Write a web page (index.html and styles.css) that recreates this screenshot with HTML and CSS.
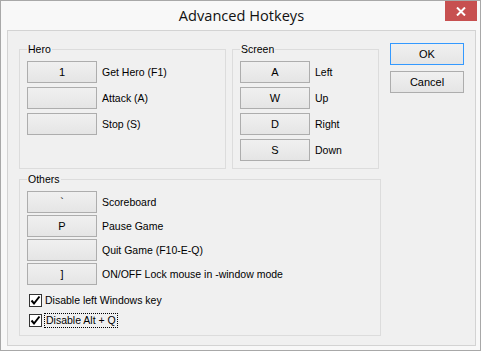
FILE: index.html
```html
<!DOCTYPE html>
<html lang="en">
<head>
  <meta charset="UTF-8">
  <title>Advanced Hotkeys</title>
  <link rel="stylesheet" href="styles.css">
</head>
<body>
  <div class="window">
    <div class="titlebar">
      <span class="title">Advanced Hotkeys</span>
      <button class="close" title="Close">
        <svg width="10" height="9" viewBox="0 0 10 9">
          <path d="M1 0.5 L9 8.5 M9 0.5 L1 8.5" stroke="#fff" stroke-width="2"/>
        </svg>
      </button>
    </div>

    <div class="client">
      <div class="top">
        <fieldset class="group hero">
          <legend>Hero</legend>
          <div class="row"><button class="key">1</button><span>Get Hero (F1)</span></div>
          <div class="row"><button class="key"></button><span>Attack (A)</span></div>
          <div class="row"><button class="key"></button><span>Stop (S)</span></div>
        </fieldset>

        <fieldset class="group screen">
          <legend>Screen</legend>
          <div class="row"><button class="key">A</button><span>Left</span></div>
          <div class="row"><button class="key">W</button><span>Up</span></div>
          <div class="row"><button class="key">D</button><span>Right</span></div>
          <div class="row"><button class="key">S</button><span>Down</span></div>
        </fieldset>

        <div class="actions">
          <button class="btn default">OK</button>
          <button class="btn">Cancel</button>
        </div>
      </div>

      <fieldset class="group others">
        <legend>Others</legend>
        <div class="row"><button class="key">`</button><span>Scoreboard</span></div>
        <div class="row"><button class="key">P</button><span>Pause Game</span></div>
        <div class="row"><button class="key"></button><span>Quit Game (F10-E-Q)</span></div>
        <div class="row"><button class="key">]</button><span>ON/OFF Lock mouse in -window mode</span></div>

        <label class="check">
          <span class="box"><svg width="11" height="11" viewBox="0 0 11 11"><path d="M1.5 5.5 L4 8.5 L9.5 1.5" fill="none" stroke="#000" stroke-width="2"/></svg></span>
          <span>Disable left Windows key</span>
        </label>
        <label class="check">
          <span class="box"><svg width="11" height="11" viewBox="0 0 11 11"><path d="M1.5 5.5 L4 8.5 L9.5 1.5" fill="none" stroke="#000" stroke-width="2"/></svg></span>
          <span class="focus">Disable Alt + Q</span>
        </label>
      </fieldset>
    </div>
  </div>
</body>
</html>
```

FILE: styles.css
```css
body {
  margin: 0;
  background: #fff;
  font-family: "Liberation Sans", Arial, sans-serif;
  font-size: 10.5px;
  color: #000;
}
.window {
  width: 481px;
  height: 351px;
  box-sizing: border-box;
  border: 1px solid #a8a8a8;
  background: #f8f8f8;
  padding: 0 4px 4px 6px;
  display: flex;
  flex-direction: column;
}
.titlebar {
  height: 29px;
  display: grid;
  grid-template-columns: 1fr auto 1fr;
  align-items: start;
}
.title {
  grid-column: 2;
  font-family: "Open Sans", "Noto Sans", sans-serif;
  font-size: 14.6px;
  line-height: 29px;
  color: #111;
}
.close {
  grid-column: 3;
  justify-self: end;
  width: 32px;
  height: 20px;
  margin-right: -1px;
  border: none;
  padding: 0;
  background: #c75050;
  display: flex;
  align-items: center;
  justify-content: center;
}
.client {
  flex: 1;
  border: 1px solid #d3d3d3;
  background: #f0f0f0;
  padding: 12px 11px 0 11px;
}
.top {
  display: grid;
  grid-template-columns: 207px 147px 74px;
  column-gap: 6px;
  height: 126px;
}
.actions {
  margin-left: 5px;
  display: flex;
  flex-direction: column;
  gap: 6px;
}
.group {
  margin: 0;
  border: 1px solid #dcdcdc;
  padding: 5px 7px 6px 7px;
  display: flex;
  flex-direction: column;
  gap: 4px;
  min-width: 0;
}
.group legend {
  padding: 0 1px;
  margin-left: 0;
  line-height: 13px;
}
.others {
  width: 362px;
  box-sizing: border-box;
  margin-top: 4px;
  height: 163px;
  gap: 2px;
}
.row {
  display: flex;
  align-items: center;
  gap: 5px;
}
.key, .btn {
  font-family: inherit;
  font-size: 11px;
  color: #000;
  height: 22px;
  padding: 0;
  border: 1px solid #adadad;
  background: linear-gradient(#f0f0f0, #e5e5e5);
}
.key {
  width: 70px;
}
.btn {
  width: 74px;
}
.btn.default {
  border-color: #3399ff;
}
.check {
  display: flex;
  align-items: center;
  gap: 3px;
  margin-left: 2px;
  height: 20px;
}
.check:first-of-type {
  margin-top: 4px;
}
.box {
  width: 11px;
  height: 11px;
  border: 1px solid #333;
  background: #fff;
  display: flex;
}
.focus {
  outline: 1px dotted #000;
  outline-offset: 0;
  padding: 0 1px;
  line-height: 13px;
}
```
